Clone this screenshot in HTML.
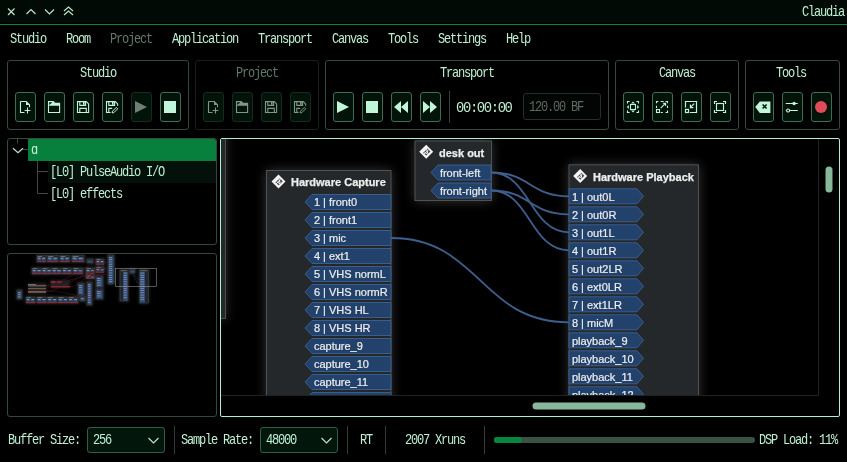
<!DOCTYPE html>
<html><head><meta charset="utf-8">
<style>
html,body{margin:0;padding:0;background:#000;width:847px;height:462px;overflow:hidden;position:relative}
div,span,svg{box-sizing:border-box}
.a{position:absolute}
.m{position:absolute;font-family:"Liberation Mono",monospace;font-size:15px;line-height:15px;letter-spacing:-1.5px;margin-left:-1px;white-space:pre;color:#bdf0d2;transform:scaleX(.8);transform-origin:0 0}
.dim{color:#5e7a6a}
.grp{position:absolute;border:1px solid #34483e;border-radius:3px;top:60px;height:70px}
.grp.dis{border-color:#161f1a}
.btn{position:absolute;top:92px;width:21px;height:30px;border:1px solid #3f6c52;border-radius:3px;background:#021409}
.btn.dis{border-color:#162b1e;background:#021409}
.btn svg{position:absolute;left:0;top:0}
.sep{position:absolute;width:1px;background:#2e3c35}
.node{position:absolute;background:#25282a;border:1px solid #47494b;box-shadow:0 0 10px 3px rgba(40,40,40,.55)}
.nt{position:absolute;font-family:"Liberation Sans",sans-serif;font-weight:bold;font-size:11px;line-height:11px;color:#eeeeee;white-space:pre}
.pt{position:absolute;font-family:"Liberation Sans",sans-serif;font-size:11px;line-height:11px;color:#eef0f2;white-space:pre}
</style></head>
<body>
<!-- title bar -->
<div class="a" style="left:0;top:0;width:847px;height:23px;background:#020a05"></div>
<div class="a" style="left:0;top:24px;width:847px;height:1px;background:#08843f"></div>
<svg class="a" style="left:0;top:0" width="90" height="24">
 <g stroke="#b8e8cc" stroke-width="1.2" fill="none">
  <path d="M8 8.5 L14.5 15 M14.5 8.5 L8 15"/>
  <path d="M26.5 14 L31 9.5 L35.5 14"/>
  <path d="M45 9.5 L49.5 14 L54 9.5"/>
  <path d="M64 11 L68.5 7 L73 11 M64 15 L68.5 11 L73 15"/>
 </g>
</svg>
<div class="m" style="left:802.5px;top:5px">Claudia</div>

<!-- menu -->
<div class="m" style="left:10.5px;top:32px">Studio</div>
<div class="m" style="left:66.5px;top:32px">Room</div>
<div class="m dim" style="left:110.5px;top:32px">Project</div>
<div class="m" style="left:172.5px;top:32px">Application</div>
<div class="m" style="left:258.5px;top:32px">Transport</div>
<div class="m" style="left:332.5px;top:32px">Canvas</div>
<div class="m" style="left:388.5px;top:32px">Tools</div>
<div class="m" style="left:439px;top:32px">Settings</div>
<div class="m" style="left:507px;top:32px">Help</div>

<!-- TOOLBAR -->
<div class="grp" style="left:7px;width:182px"></div>
<div class="m" style="left:80.5px;top:66px">Studio</div>
<div class="grp dis" style="left:195px;width:124px"></div>
<div class="m dim" style="left:236.5px;top:66px">Project</div>
<div class="grp" style="left:325px;width:284px"></div>
<div class="m" style="left:441px;top:66px">Transport</div>
<div class="grp" style="left:615px;width:124px"></div>
<div class="m" style="left:659.5px;top:66px">Canvas</div>
<div class="grp" style="left:745px;width:95px"></div>
<div class="m" style="left:776.5px;top:66px">Tools</div>

<!-- TOOLBUTTONS -->
<div class="btn" style="left:15px"><svg width="21" height="30" viewBox="1 1 21 30"><g fill="none" stroke="#c0f6da" stroke-width="1.1"><path d="M5.5 9.5 H11.2 L14.5 12.8 V15.3 M5.5 9.5 V20.5 H9.5"/><path d="M12.5 15.6 V21.4 M9.6 18.5 H15.4"/></g><path d="M11 9.5 L14.5 13 H11 Z" fill="#c0f6da"/></svg></div>
<div class="btn" style="left:44px"><svg width="21" height="30" viewBox="1 1 21 30"><path d="M4.5 20.5 V9.6 H9.2 L11 11.4 H15.6 V20.5 Z" fill="none" stroke="#c0f6da" stroke-width="1.1"/><path d="M4.5 9.6 H9.2 L11 11.4 H15.6 V13.7 H4.5 Z" fill="#c0f6da"/><path d="M5.1 10.2 H8.5 L5.1 13.1 Z" fill="#021409"/></svg></div>
<div class="btn" style="left:73px"><svg width="21" height="30" viewBox="1 1 21 30"><path d="M4.5 9.6 H13.3 L15.6 11.9 V20.5 H4.5 Z" fill="none" stroke="#c0f6da" stroke-width="1.1"/><path d="M6.8 9.6 V13.4 H12.6 V9.6" fill="none" stroke="#c0f6da" stroke-width="1.1"/><rect x="10" y="10" width="1.6" height="2.8" fill="#c0f6da"/><path d="M6.8 20.5 V16.4 H13.3 V20.5" fill="none" stroke="#c0f6da" stroke-width="1.1"/></svg></div>
<div class="btn" style="left:102px"><svg width="21" height="30" viewBox="1 1 21 30"><path d="M8.6 20.5 H4.5 V9.6 H13.3 L15.6 11.9 V13.8" fill="none" stroke="#c0f6da" stroke-width="1.1"/><path d="M6.8 9.6 V13.4 H12.6 V9.6" fill="none" stroke="#c0f6da" stroke-width="1.1"/><rect x="10" y="10" width="1.6" height="2.8" fill="#c0f6da"/><path d="M6.8 20.5 V16.4 H10.2" fill="none" stroke="#c0f6da" stroke-width="1.1"/><path d="M10.1 20.9 L10.5 19.2 L14.3 15.4 L15.7 16.8 L11.9 20.6 Z" fill="none" stroke="#c0f6da" stroke-width="1"/></svg></div>
<div class="btn dis" style="left:131px"><svg width="21" height="30" viewBox="1 1 21 30"><path d="M4 9 L16 15 L4 21 Z" fill="#6e8074"/></svg></div>
<div class="btn" style="left:160px"><svg width="21" height="30" viewBox="1 1 21 30"><rect x="4" y="9" width="12" height="12" fill="#c0f6da"/></svg></div>
<div class="btn dis" style="left:203px"><svg width="21" height="30" viewBox="1 1 21 30"><g fill="none" stroke="#84968a" stroke-width="1.1"><path d="M5.5 9.5 H11.2 L14.5 12.8 V15.3 M5.5 9.5 V20.5 H9.5"/><path d="M12.5 15.6 V21.4 M9.6 18.5 H15.4"/></g><path d="M11 9.5 L14.5 13 H11 Z" fill="#84968a"/></svg></div>
<div class="btn dis" style="left:232px"><svg width="21" height="30" viewBox="1 1 21 30"><path d="M4.5 20.5 V9.6 H9.2 L11 11.4 H15.6 V20.5 Z" fill="none" stroke="#84968a" stroke-width="1.1"/><path d="M4.5 9.6 H9.2 L11 11.4 H15.6 V13.7 H4.5 Z" fill="#84968a"/><path d="M5.1 10.2 H8.5 L5.1 13.1 Z" fill="#021409"/></svg></div>
<div class="btn dis" style="left:261px"><svg width="21" height="30" viewBox="1 1 21 30"><path d="M4.5 9.6 H13.3 L15.6 11.9 V20.5 H4.5 Z" fill="none" stroke="#84968a" stroke-width="1.1"/><path d="M6.8 9.6 V13.4 H12.6 V9.6" fill="none" stroke="#84968a" stroke-width="1.1"/><rect x="10" y="10" width="1.6" height="2.8" fill="#84968a"/><path d="M6.8 20.5 V16.4 H13.3 V20.5" fill="none" stroke="#84968a" stroke-width="1.1"/></svg></div>
<div class="btn dis" style="left:290px"><svg width="21" height="30" viewBox="1 1 21 30"><path d="M8.6 20.5 H4.5 V9.6 H13.3 L15.6 11.9 V13.8" fill="none" stroke="#84968a" stroke-width="1.1"/><path d="M6.8 9.6 V13.4 H12.6 V9.6" fill="none" stroke="#84968a" stroke-width="1.1"/><rect x="10" y="10" width="1.6" height="2.8" fill="#84968a"/><path d="M6.8 20.5 V16.4 H10.2" fill="none" stroke="#84968a" stroke-width="1.1"/><path d="M10.1 20.9 L10.5 19.2 L14.3 15.4 L15.7 16.8 L11.9 20.6 Z" fill="none" stroke="#84968a" stroke-width="1"/></svg></div>
<div class="btn" style="left:333px"><svg width="21" height="30" viewBox="1 1 21 30"><path d="M4 9 L16 15 L4 21 Z" fill="#c0f6da"/></svg></div>
<div class="btn" style="left:362px"><svg width="21" height="30" viewBox="1 1 21 30"><rect x="4" y="9" width="12" height="12" fill="#c0f6da"/></svg></div>
<div class="btn" style="left:391px"><svg width="21" height="30" viewBox="1 1 21 30"><path d="M3 15 L10 9 V21 Z M10 15 L17 9 V21 Z" fill="#c0f6da"/></svg></div>
<div class="btn" style="left:420px"><svg width="21" height="30" viewBox="1 1 21 30"><path d="M17 15 L10 9 V21 Z M10 15 L3 9 V21 Z" fill="#c0f6da"/></svg></div>
<div class="btn" style="left:623px"><svg width="21" height="30" viewBox="1 1 21 30"><g fill="none" stroke="#c0f6da" stroke-width="1.1"><path d="M4.5 11.6 V9.5 H6.6 M13.4 9.5 H15.5 V11.6 M15.5 18.4 V20.5 H13.4 M6.6 20.5 H4.5 V18.4"/><rect x="7.5" y="12.5" width="5" height="5"/></g><path d="M8 11.4 L10 9.4 L12 11.4 Z M8 18.6 L10 20.6 L12 18.6 Z M5.8 13 L3.8 15 L5.8 17 Z M14.2 13 L16.2 15 L14.2 17 Z" fill="#c0f6da"/></svg></div>
<div class="btn" style="left:652px"><svg width="21" height="30" viewBox="1 1 21 30"><g fill="none" stroke="#c0f6da" stroke-width="1.1"><path d="M4.5 11.2 V9.5 H6.3 M8.7 9.5 H11.6 M13.6 9.5 H15.5 V11.2 M15.5 13.7 V16.1 M15.5 18.6 V20.5 H13.6 M8.7 20.5 H10.8 M4.5 13.7 V16.1"/><rect x="4.5" y="17.5" width="3" height="3"/><path d="M8.7 16.1 L13.4 11.4 M10.8 11.2 H13.6 V14"/></g></svg></div>
<div class="btn" style="left:681px"><svg width="21" height="30" viewBox="1 1 21 30"><g fill="none" stroke="#c0f6da" stroke-width="1.2"><path d="M4.5 15.4 V9.5 H15.5 V20.5 H8.8"/><rect x="4.5" y="17.4" width="3" height="3.1"/><path d="M13.2 11.6 L9.4 15.4 M9.4 12.6 V15.6 H12.4"/></g></svg></div>
<div class="btn" style="left:710px"><svg width="21" height="30" viewBox="1 1 21 30"><g fill="none" stroke="#c0f6da" stroke-width="1.2"><path d="M4.5 12 V9.5 H7 M13 9.5 H15.5 V12 M15.5 18 V20.5 H13 M7 20.5 H4.5 V18"/><rect x="6.5" y="11.5" width="7" height="7" stroke-width="1.15"/></g></svg></div>
<div class="btn" style="left:753px"><svg width="21" height="30" viewBox="1 1 21 30"><path d="M2.2 15 L6.8 9.4 H17.4 V21 H6.8 Z" fill="#c0f6da"/><path d="M9.6 12.4 L13.6 16.6 M13.6 12.4 L9.6 16.6" stroke="#04120a" stroke-width="1.5"/></svg></div>
<div class="btn" style="left:782px"><svg width="21" height="30" viewBox="1 1 21 30"><g stroke="#c0f6da" stroke-width="1.1" fill="none"><path d="M3.8 11.5 H15.8 M7.6 18.5 H15.8 M3.8 18.5 H4.5"/><circle cx="6.1" cy="18.5" r="1.5"/></g><circle cx="12.1" cy="11.5" r="1.7" fill="#c0f6da"/></svg></div>
<div class="btn" style="left:811px"><svg width="21" height="30" viewBox="1 1 21 30"><circle cx="10" cy="15" r="6" fill="#e04a5a"/></svg></div>
<div class="sep" style="left:449px;top:91px;height:32px;background:#33433b"></div>
<div class="m" style="left:457px;top:100.5px;transform:scaleX(.925)">00:00:00</div>
<div class="a" style="left:523px;top:93px;width:78px;height:27px;border:1px solid #22302a;border-radius:3px;background:#020503"></div>
<div class="m" style="left:530px;top:100px;color:#5c6a62">120.00 BF</div>
<!-- LEFT PANELS -->
<div class="a" style="left:7px;top:138px;width:210px;height:107px;border:1px solid #34483e;border-radius:3px"></div>
<div class="a" style="left:28px;top:139px;width:188px;height:22px;background:#07803e;border-top-right-radius:2px"></div>
<div class="a" style="left:48px;top:161px;width:168px;height:22px;background:#03110a"></div>
<svg class="a" style="left:0;top:130px" width="60" height="80">
 <g stroke="#3c4c44" stroke-width="1" fill="none">
  <path d="M17.5 9 V13.5"/>
  <path d="M23 19.5 H28"/>
  <path d="M37.5 31 V63.5 H48 M37.5 41.5 H48"/>
 </g>
 <path d="M13 18.3 L18 22.8 L23 18.3" stroke="#b8e8cc" stroke-width="1.2" fill="none"/>
</svg>
<div class="m" style="left:32px;top:143px;color:#c8f0d8">ɑ</div>
<div class="m" style="left:50.5px;top:165px">[L0] PulseAudio I/O</div>
<div class="m" style="left:50.5px;top:187px">[L0] effects</div>
<div class="a" style="left:7px;top:253px;width:210px;height:164px;border:1px solid #34483e;border-radius:3px"></div>
<svg class="a" style="left:8px;top:254px" width="208" height="60" viewBox="8 254 208 60">
<defs><filter id="bl" x="-20%" y="-20%" width="140%" height="140%"><feGaussianBlur stdDeviation="0.5"/></filter><filter id="gl" x="-50%" y="-50%" width="200%" height="200%"><feGaussianBlur stdDeviation="1.6"/></filter></defs>
<g filter="url(#gl)" fill="#3a3c40" opacity=".55">
<rect x="36" y="254.5" width="11" height="8.5"/>
<rect x="46.5" y="254.5" width="12.5" height="8.5"/>
<rect x="59" y="254.5" width="11.5" height="8.5"/>
<rect x="71" y="254.5" width="14" height="8.5"/>
<rect x="31" y="267" width="11.5" height="8"/>
<rect x="41" y="267" width="11.5" height="8"/>
<rect x="51" y="267" width="11.5" height="8"/>
<rect x="61.5" y="267" width="11" height="8"/>
<rect x="72" y="267" width="12" height="8"/>
<rect x="25" y="296" width="11" height="8"/>
<rect x="36" y="296" width="11.5" height="8"/>
<rect x="46.5" y="296" width="11.5" height="8"/>
<rect x="57" y="296" width="12" height="8"/>
<rect x="67.5" y="296" width="11.5" height="8"/>
<rect x="86" y="258" width="8" height="6"/>
<rect x="95" y="258" width="10" height="7.5"/>
<rect x="85" y="267" width="10.5" height="7.5"/>
<rect x="95" y="266" width="10" height="7.5"/>
<rect x="85" y="273.5" width="10.5" height="6"/>
<rect x="107" y="254" width="8" height="31"/>
<rect x="16" y="289" width="7" height="11"/>
<rect x="77" y="282" width="8" height="14"/>
<rect x="86" y="281" width="7" height="25"/>
<rect x="95" y="275" width="9" height="13"/>
<rect x="95" y="288" width="9" height="12"/>
<rect x="79" y="295" width="7" height="7"/>
<rect x="119" y="269" width="10" height="33"/>
<rect x="129" y="268" width="7" height="6"/>
<rect x="138.5" y="269" width="11" height="35"/>
<rect x="28" y="283" width="19" height="11"/><rect x="50" y="280" width="20" height="8"/>
</g>
<g filter="url(#bl)">
<rect x="37" y="255.5" width="9" height="6.5" fill="#24272b" stroke="#4a4c50" stroke-width=".4"/>
<rect x="37.6" y="257.3" width="3.6" height="3.3" fill="#34507a"/>
<rect x="41.8" y="257.3" width="3.6" height="3.3" fill="#34507a"/>
<rect x="37.6" y="256.0" width="4.5" height=".6" fill="#9a9ca0"/>
<rect x="37.6" y="257.9" width="2.6999999999999997" height=".5" fill="#c8d0dc"/><rect x="42.4" y="257.9" width="2.6999999999999997" height=".5" fill="#c8d0dc"/>
<rect x="37" y="261.0" width="9" height="1.1" fill="#8e2636"/>
<rect x="47.5" y="255.5" width="10.5" height="6.5" fill="#24272b" stroke="#4a4c50" stroke-width=".4"/>
<rect x="48.1" y="257.3" width="4.35" height="3.3" fill="#34507a"/>
<rect x="53.05" y="257.3" width="4.35" height="3.3" fill="#34507a"/>
<rect x="48.1" y="256.0" width="5.25" height=".6" fill="#9a9ca0"/>
<rect x="48.1" y="257.9" width="3.15" height=".5" fill="#c8d0dc"/><rect x="53.65" y="257.9" width="3.15" height=".5" fill="#c8d0dc"/>
<rect x="47.5" y="261.0" width="10.5" height="1.1" fill="#8e2636"/>
<rect x="60" y="255.5" width="9.5" height="6.5" fill="#24272b" stroke="#4a4c50" stroke-width=".4"/>
<rect x="60.6" y="257.3" width="3.85" height="3.3" fill="#34507a"/>
<rect x="65.05" y="257.3" width="3.85" height="3.3" fill="#34507a"/>
<rect x="60.6" y="256.0" width="4.75" height=".6" fill="#9a9ca0"/>
<rect x="60.6" y="257.9" width="2.85" height=".5" fill="#c8d0dc"/><rect x="65.65" y="257.9" width="2.85" height=".5" fill="#c8d0dc"/>
<rect x="60" y="261.0" width="9.5" height="1.1" fill="#8e2636"/>
<rect x="72" y="255.5" width="12" height="6.5" fill="#24272b" stroke="#4a4c50" stroke-width=".4"/>
<rect x="72.6" y="257.3" width="5.1" height="3.3" fill="#34507a"/>
<rect x="78.3" y="257.3" width="5.1" height="3.3" fill="#34507a"/>
<rect x="72.6" y="256.0" width="6.0" height=".6" fill="#9a9ca0"/>
<rect x="72.6" y="257.9" width="3.5999999999999996" height=".5" fill="#c8d0dc"/><rect x="78.9" y="257.9" width="3.5999999999999996" height=".5" fill="#c8d0dc"/>
<rect x="72" y="261.0" width="12" height="1.1" fill="#8e2636"/>
<rect x="32" y="268" width="9.5" height="6" fill="#24272b" stroke="#4a4c50" stroke-width=".4"/>
<rect x="32.6" y="269.8" width="3.85" height="2.8" fill="#34507a"/>
<rect x="37.05" y="269.8" width="3.85" height="2.8" fill="#34507a"/>
<rect x="32.6" y="268.5" width="4.75" height=".6" fill="#9a9ca0"/>
<rect x="32.6" y="270.4" width="2.85" height=".5" fill="#c8d0dc"/><rect x="37.65" y="270.4" width="2.85" height=".5" fill="#c8d0dc"/>
<rect x="32" y="273" width="9.5" height="1.1" fill="#8e2636"/>
<rect x="42" y="268" width="9.5" height="6" fill="#24272b" stroke="#4a4c50" stroke-width=".4"/>
<rect x="42.6" y="269.8" width="3.85" height="2.8" fill="#34507a"/>
<rect x="47.05" y="269.8" width="3.85" height="2.8" fill="#34507a"/>
<rect x="42.6" y="268.5" width="4.75" height=".6" fill="#9a9ca0"/>
<rect x="42.6" y="270.4" width="2.85" height=".5" fill="#c8d0dc"/><rect x="47.65" y="270.4" width="2.85" height=".5" fill="#c8d0dc"/>
<rect x="42" y="273" width="9.5" height="1.1" fill="#8e2636"/>
<rect x="52" y="268" width="9.5" height="6" fill="#24272b" stroke="#4a4c50" stroke-width=".4"/>
<rect x="52.6" y="269.8" width="3.85" height="2.8" fill="#34507a"/>
<rect x="57.05" y="269.8" width="3.85" height="2.8" fill="#34507a"/>
<rect x="52.6" y="268.5" width="4.75" height=".6" fill="#9a9ca0"/>
<rect x="52.6" y="270.4" width="2.85" height=".5" fill="#c8d0dc"/><rect x="57.65" y="270.4" width="2.85" height=".5" fill="#c8d0dc"/>
<rect x="52" y="273" width="9.5" height="1.1" fill="#8e2636"/>
<rect x="62.5" y="268" width="9" height="6" fill="#24272b" stroke="#4a4c50" stroke-width=".4"/>
<rect x="63.1" y="269.8" width="3.6" height="2.8" fill="#34507a"/>
<rect x="67.3" y="269.8" width="3.6" height="2.8" fill="#34507a"/>
<rect x="63.1" y="268.5" width="4.5" height=".6" fill="#9a9ca0"/>
<rect x="63.1" y="270.4" width="2.6999999999999997" height=".5" fill="#c8d0dc"/><rect x="67.9" y="270.4" width="2.6999999999999997" height=".5" fill="#c8d0dc"/>
<rect x="62.5" y="273" width="9" height="1.1" fill="#8e2636"/>
<rect x="73" y="268" width="10" height="6" fill="#24272b" stroke="#4a4c50" stroke-width=".4"/>
<rect x="73.6" y="269.8" width="4.1" height="2.8" fill="#34507a"/>
<rect x="78.3" y="269.8" width="4.1" height="2.8" fill="#34507a"/>
<rect x="73.6" y="268.5" width="5.0" height=".6" fill="#9a9ca0"/>
<rect x="73.6" y="270.4" width="3.0" height=".5" fill="#c8d0dc"/><rect x="78.9" y="270.4" width="3.0" height=".5" fill="#c8d0dc"/>
<rect x="73" y="273" width="10" height="1.1" fill="#8e2636"/>
<rect x="26" y="297" width="9" height="6" fill="#24272b" stroke="#4a4c50" stroke-width=".4"/>
<rect x="26.6" y="298.8" width="3.6" height="2.8" fill="#34507a"/>
<rect x="30.8" y="298.8" width="3.6" height="2.8" fill="#34507a"/>
<rect x="26.6" y="297.5" width="4.5" height=".6" fill="#9a9ca0"/>
<rect x="26.6" y="299.4" width="2.6999999999999997" height=".5" fill="#c8d0dc"/><rect x="31.4" y="299.4" width="2.6999999999999997" height=".5" fill="#c8d0dc"/>
<rect x="26" y="302" width="9" height="1.1" fill="#8e2636"/>
<rect x="37" y="297" width="9.5" height="6" fill="#24272b" stroke="#4a4c50" stroke-width=".4"/>
<rect x="37.6" y="298.8" width="3.85" height="2.8" fill="#34507a"/>
<rect x="42.05" y="298.8" width="3.85" height="2.8" fill="#34507a"/>
<rect x="37.6" y="297.5" width="4.75" height=".6" fill="#9a9ca0"/>
<rect x="37.6" y="299.4" width="2.85" height=".5" fill="#c8d0dc"/><rect x="42.65" y="299.4" width="2.85" height=".5" fill="#c8d0dc"/>
<rect x="37" y="302" width="9.5" height="1.1" fill="#8e2636"/>
<rect x="47.5" y="297" width="9.5" height="6" fill="#24272b" stroke="#4a4c50" stroke-width=".4"/>
<rect x="48.1" y="298.8" width="3.85" height="2.8" fill="#34507a"/>
<rect x="52.55" y="298.8" width="3.85" height="2.8" fill="#34507a"/>
<rect x="48.1" y="297.5" width="4.75" height=".6" fill="#9a9ca0"/>
<rect x="48.1" y="299.4" width="2.85" height=".5" fill="#c8d0dc"/><rect x="53.15" y="299.4" width="2.85" height=".5" fill="#c8d0dc"/>
<rect x="47.5" y="302" width="9.5" height="1.1" fill="#8e2636"/>
<rect x="58" y="297" width="10" height="6" fill="#24272b" stroke="#4a4c50" stroke-width=".4"/>
<rect x="58.6" y="298.8" width="4.1" height="2.8" fill="#34507a"/>
<rect x="63.3" y="298.8" width="4.1" height="2.8" fill="#34507a"/>
<rect x="58.6" y="297.5" width="5.0" height=".6" fill="#9a9ca0"/>
<rect x="58.6" y="299.4" width="3.0" height=".5" fill="#c8d0dc"/><rect x="63.9" y="299.4" width="3.0" height=".5" fill="#c8d0dc"/>
<rect x="58" y="302" width="10" height="1.1" fill="#8e2636"/>
<rect x="68.5" y="297" width="9.5" height="6" fill="#24272b" stroke="#4a4c50" stroke-width=".4"/>
<rect x="69.1" y="298.8" width="3.85" height="2.8" fill="#34507a"/>
<rect x="73.55" y="298.8" width="3.85" height="2.8" fill="#34507a"/>
<rect x="69.1" y="297.5" width="4.75" height=".6" fill="#9a9ca0"/>
<rect x="69.1" y="299.4" width="2.85" height=".5" fill="#c8d0dc"/><rect x="74.15" y="299.4" width="2.85" height=".5" fill="#c8d0dc"/>
<rect x="68.5" y="302" width="9.5" height="1.1" fill="#8e2636"/>
<rect x="87" y="259" width="6" height="4" fill="#24272b" stroke="#4a4c50" stroke-width=".4"/>
<rect x="87.6" y="260.5" width="4.8" height="2" fill="#34507c"/>
<rect x="96" y="259" width="8" height="5.5" fill="#24272b" stroke="#4a4c50" stroke-width=".4"/>
<rect x="96.6" y="260.8" width="3.1" height="2.3" fill="#34507a"/>
<rect x="100.3" y="260.8" width="3.1" height="2.3" fill="#34507a"/>
<rect x="96.6" y="259.5" width="4.0" height=".6" fill="#9a9ca0"/>
<rect x="96.6" y="261.4" width="2.4" height=".5" fill="#c8d0dc"/><rect x="100.9" y="261.4" width="2.4" height=".5" fill="#c8d0dc"/>
<rect x="96" y="263.5" width="8" height="1.1" fill="#8e2636"/>
<rect x="86" y="268" width="8.5" height="5.5" fill="#24272b" stroke="#4a4c50" stroke-width=".4"/>
<rect x="86.6" y="269.8" width="3.35" height="2.3" fill="#34507a"/>
<rect x="90.55" y="269.8" width="3.35" height="2.3" fill="#34507a"/>
<rect x="86.6" y="268.5" width="4.25" height=".6" fill="#9a9ca0"/>
<rect x="86.6" y="270.4" width="2.55" height=".5" fill="#c8d0dc"/><rect x="91.15" y="270.4" width="2.55" height=".5" fill="#c8d0dc"/>
<rect x="86" y="272.5" width="8.5" height="1.1" fill="#8e2636"/>
<rect x="96" y="267" width="8" height="5.5" fill="#24272b" stroke="#4a4c50" stroke-width=".4"/>
<rect x="96.6" y="268.8" width="3.1" height="2.3" fill="#34507a"/>
<rect x="100.3" y="268.8" width="3.1" height="2.3" fill="#34507a"/>
<rect x="96.6" y="267.5" width="4.0" height=".6" fill="#9a9ca0"/>
<rect x="96.6" y="269.4" width="2.4" height=".5" fill="#c8d0dc"/><rect x="100.9" y="269.4" width="2.4" height=".5" fill="#c8d0dc"/>
<rect x="96" y="271.5" width="8" height="1.1" fill="#8e2636"/>
<rect x="86" y="274.5" width="8.5" height="4" fill="#24272b" stroke="#4a4c50" stroke-width=".4"/>
<rect x="86.6" y="276.3" width="3.35" height="0.7999999999999998" fill="#34507a"/>
<rect x="90.55" y="276.3" width="3.35" height="0.7999999999999998" fill="#34507a"/>
<rect x="86.6" y="275.0" width="4.25" height=".6" fill="#9a9ca0"/>
<rect x="86.6" y="276.9" width="2.55" height=".5" fill="#c8d0dc"/><rect x="91.15" y="276.9" width="2.55" height=".5" fill="#c8d0dc"/>
<rect x="86" y="277.5" width="8.5" height="1.1" fill="#8e2636"/>
<rect x="108" y="255" width="6" height="29" fill="#24272b" stroke="#4a4c50" stroke-width=".4"/>
<rect x="108.6" y="256.5" width="4.8" height="27" fill="#34507c"/>
<rect x="109" y="257.3" width="3.0" height=".5" fill="#aab6c8"/>
<rect x="109" y="259.5" width="3.0" height=".5" fill="#aab6c8"/>
<rect x="109" y="261.7" width="3.0" height=".5" fill="#aab6c8"/>
<rect x="109" y="263.90000000000003" width="3.0" height=".5" fill="#aab6c8"/>
<rect x="109" y="266.1" width="3.0" height=".5" fill="#aab6c8"/>
<rect x="109" y="268.3" width="3.0" height=".5" fill="#aab6c8"/>
<rect x="109" y="270.5" width="3.0" height=".5" fill="#aab6c8"/>
<rect x="109" y="272.7" width="3.0" height=".5" fill="#aab6c8"/>
<rect x="109" y="274.90000000000003" width="3.0" height=".5" fill="#aab6c8"/>
<rect x="109" y="277.1" width="3.0" height=".5" fill="#aab6c8"/>
<rect x="109" y="279.3" width="3.0" height=".5" fill="#aab6c8"/>
<rect x="109" y="281.5" width="3.0" height=".5" fill="#aab6c8"/>
<rect x="17" y="290" width="5" height="9" fill="#24272b" stroke="#4a4c50" stroke-width=".4"/>
<rect x="17.6" y="291.5" width="3.8" height="7" fill="#34507c"/>
<rect x="18" y="292.3" width="2.5" height=".5" fill="#aab6c8"/>
<rect x="18" y="294.5" width="2.5" height=".5" fill="#aab6c8"/>
<rect x="18" y="296.7" width="2.5" height=".5" fill="#aab6c8"/>
<rect x="78" y="283" width="6" height="12" fill="#24272b" stroke="#4a4c50" stroke-width=".4"/>
<rect x="78.6" y="284.5" width="4.8" height="10" fill="#34507c"/>
<rect x="79" y="285.3" width="3.0" height=".5" fill="#aab6c8"/>
<rect x="79" y="287.5" width="3.0" height=".5" fill="#aab6c8"/>
<rect x="79" y="289.7" width="3.0" height=".5" fill="#aab6c8"/>
<rect x="79" y="291.90000000000003" width="3.0" height=".5" fill="#aab6c8"/>
<rect x="87" y="282" width="5" height="23" fill="#24272b" stroke="#4a4c50" stroke-width=".4"/>
<rect x="87.6" y="283.5" width="3.8" height="21" fill="#34507c"/>
<rect x="88" y="284.3" width="2.5" height=".5" fill="#aab6c8"/>
<rect x="88" y="286.5" width="2.5" height=".5" fill="#aab6c8"/>
<rect x="88" y="288.7" width="2.5" height=".5" fill="#aab6c8"/>
<rect x="88" y="290.90000000000003" width="2.5" height=".5" fill="#aab6c8"/>
<rect x="88" y="293.1" width="2.5" height=".5" fill="#aab6c8"/>
<rect x="88" y="295.3" width="2.5" height=".5" fill="#aab6c8"/>
<rect x="88" y="297.5" width="2.5" height=".5" fill="#aab6c8"/>
<rect x="88" y="299.7" width="2.5" height=".5" fill="#aab6c8"/>
<rect x="88" y="301.90000000000003" width="2.5" height=".5" fill="#aab6c8"/>
<rect x="96" y="276" width="7" height="11" fill="#24272b" stroke="#4a4c50" stroke-width=".4"/>
<rect x="96.6" y="277.5" width="5.8" height="9" fill="#34507c"/>
<rect x="97" y="278.3" width="3.5" height=".5" fill="#aab6c8"/>
<rect x="97" y="280.5" width="3.5" height=".5" fill="#aab6c8"/>
<rect x="97" y="282.7" width="3.5" height=".5" fill="#aab6c8"/>
<rect x="97" y="284.90000000000003" width="3.5" height=".5" fill="#aab6c8"/>
<rect x="96" y="289" width="7" height="10" fill="#24272b" stroke="#4a4c50" stroke-width=".4"/>
<rect x="96.6" y="290.5" width="5.8" height="8" fill="#34507c"/>
<rect x="97" y="291.3" width="3.5" height=".5" fill="#aab6c8"/>
<rect x="97" y="293.5" width="3.5" height=".5" fill="#aab6c8"/>
<rect x="97" y="295.7" width="3.5" height=".5" fill="#aab6c8"/>
<rect x="80" y="296" width="5" height="5" fill="#24272b" stroke="#4a4c50" stroke-width=".4"/>
<rect x="80.6" y="297.5" width="3.8" height="3" fill="#34507c"/>
<rect x="81" y="298.3" width="2.5" height=".5" fill="#aab6c8"/>
<rect x="120" y="270" width="8" height="31" fill="#24272b" stroke="#4a4c50" stroke-width=".4"/>
<rect x="123.2" y="272" width="4.4" height="28.5" fill="#34507c"/>
<rect x="121" y="270.6" width="5.6" height=".5" fill="#9aa0a8"/>
<rect x="123.60000000000001" y="272.8" width="3.2" height=".5" fill="#aab6c8"/>
<rect x="123.60000000000001" y="275.0" width="3.2" height=".5" fill="#aab6c8"/>
<rect x="123.60000000000001" y="277.2" width="3.2" height=".5" fill="#aab6c8"/>
<rect x="123.60000000000001" y="279.40000000000003" width="3.2" height=".5" fill="#aab6c8"/>
<rect x="123.60000000000001" y="281.6" width="3.2" height=".5" fill="#aab6c8"/>
<rect x="123.60000000000001" y="283.8" width="3.2" height=".5" fill="#aab6c8"/>
<rect x="123.60000000000001" y="286.0" width="3.2" height=".5" fill="#aab6c8"/>
<rect x="123.60000000000001" y="288.2" width="3.2" height=".5" fill="#aab6c8"/>
<rect x="123.60000000000001" y="290.40000000000003" width="3.2" height=".5" fill="#aab6c8"/>
<rect x="123.60000000000001" y="292.6" width="3.2" height=".5" fill="#aab6c8"/>
<rect x="123.60000000000001" y="294.8" width="3.2" height=".5" fill="#aab6c8"/>
<rect x="123.60000000000001" y="297.0" width="3.2" height=".5" fill="#aab6c8"/>
<rect x="130" y="269" width="5" height="4" fill="#24272b" stroke="#4a4c50" stroke-width=".4"/>
<rect x="130.6" y="270.5" width="3.8" height="2" fill="#34507c"/>
<rect x="139.5" y="270" width="9" height="33" fill="#24272b" stroke="#4a4c50" stroke-width=".4"/>
<rect x="140.0" y="272" width="4.95" height="30.5" fill="#34507c"/>
<rect x="140.5" y="270.6" width="6.3" height=".5" fill="#9aa0a8"/>
<rect x="140.4" y="272.8" width="3.6" height=".5" fill="#aab6c8"/>
<rect x="140.4" y="275.0" width="3.6" height=".5" fill="#aab6c8"/>
<rect x="140.4" y="277.2" width="3.6" height=".5" fill="#aab6c8"/>
<rect x="140.4" y="279.40000000000003" width="3.6" height=".5" fill="#aab6c8"/>
<rect x="140.4" y="281.6" width="3.6" height=".5" fill="#aab6c8"/>
<rect x="140.4" y="283.8" width="3.6" height=".5" fill="#aab6c8"/>
<rect x="140.4" y="286.0" width="3.6" height=".5" fill="#aab6c8"/>
<rect x="140.4" y="288.2" width="3.6" height=".5" fill="#aab6c8"/>
<rect x="140.4" y="290.40000000000003" width="3.6" height=".5" fill="#aab6c8"/>
<rect x="140.4" y="292.6" width="3.6" height=".5" fill="#aab6c8"/>
<rect x="140.4" y="294.8" width="3.6" height=".5" fill="#aab6c8"/>
<rect x="140.4" y="297.0" width="3.6" height=".5" fill="#aab6c8"/>
<rect x="140.4" y="299.2" width="3.6" height=".5" fill="#aab6c8"/>
<g fill="#6e5444"><rect x="28" y="285" width="18" height="1.4"/><rect x="28" y="288" width="18" height="1.2"/></g>
<rect x="28" y="291" width="18" height="1.8" fill="#7e5a48"/>
<rect x="28" y="284" width="8" height=".5" fill="#c0c0c0"/>
<g fill="#8a2434"><rect x="51" y="281" width="4.5" height="2"/><rect x="57" y="281" width="4.5" height="2"/><rect x="51" y="286" width="19" height="1.5"/></g>
<g stroke="#5e1c28" stroke-width=".5" fill="none" opacity=".9"><path d="M46 292 C62 290 80 272 108 268 M46 291 C70 291 85 300 96 299 M61 282 C75 280 90 272 108 275 M70 287 C85 285 95 262 108 262 M46 286 C60 284 80 270 96 262"/></g>
</g>
<path d="M130 271 C134 271 136 280 139.5 280 M130 273 C134 273 136 284 139.5 284" stroke="#3a5080" stroke-width=".4" fill="none"/><rect x="115.5" y="268.5" width="41" height="18" fill="none" stroke="#a0a0a0" stroke-width=".7" opacity=".75"/>
</svg>
<!-- CANVAS -->
<div class="a" style="left:220px;top:138px;width:620px;height:279px;border:1px solid #b0f0d0;border-radius:2px;background:#000"></div>
<svg class="a" style="left:221px;top:139px;will-change:transform" width="618" height="277" viewBox="221 139 618 277" font-family="'Liberation Sans', sans-serif">
<defs><filter id="glow" x="-50%" y="-50%" width="200%" height="200%"><feGaussianBlur stdDeviation="6"/></filter><clipPath id="scene"><rect x="221" y="139" width="597" height="256"/></clipPath></defs>
<g clip-path="url(#scene)">
<rect x="150" y="120" width="75.5" height="198.5" fill="#484848" filter="url(#glow)" opacity=".7"/>
<rect x="150" y="120" width="75.5" height="198.5" fill="#25282a" stroke="#4a4c4e" stroke-width="1"/>
<rect x="266" y="170" width="125.5" height="260" fill="#484848" filter="url(#glow)" opacity=".7"/>
<rect x="266.5" y="170.5" width="124.5" height="259" fill="#25282a" stroke="#505254" stroke-width="1"/>
<path d="M278.5 174.4 L285.5 181.4 L278.5 188.4 L271.5 181.4 Z" fill="#f4f4f4"/>
<path d="M279.7 178.20000000000002 L282.7 181.20000000000002 L278.7 185.20000000000002 L275.3 182.6 Z" fill="#4a4a4a"/>
<path d="M276.7 181.6 L281.1 184.6 M278.9 178.8 L280.1 183.0 M275.9 184.0 L280.7 179.6" stroke="#f4f4f4" stroke-width="1" fill="none"/>
<text x="291" y="185.5" font-size="11" font-weight="bold" fill="#eeeeee" stroke="#eeeeee" stroke-width=".25">Hardware Capture</text>
<path d="M305 202.0 L312 194.5 H391 V209.5 H312 Z" fill="#22416b" stroke="#3b5d8c" stroke-width="1"/>
<text x="313.9" y="205.9" font-size="11" fill="#eeeeee" stroke="#eeeeee" stroke-width=".2">1 | front0</text>
<path d="M305 220.0 L312 212.5 H391 V227.5 H312 Z" fill="#22416b" stroke="#3b5d8c" stroke-width="1"/>
<text x="313.9" y="223.9" font-size="11" fill="#eeeeee" stroke="#eeeeee" stroke-width=".2">2 | front1</text>
<path d="M305 238.0 L312 230.5 H391 V245.5 H312 Z" fill="#22416b" stroke="#3b5d8c" stroke-width="1"/>
<text x="313.9" y="241.9" font-size="11" fill="#eeeeee" stroke="#eeeeee" stroke-width=".2">3 | mic</text>
<path d="M305 256.0 L312 248.5 H391 V263.5 H312 Z" fill="#22416b" stroke="#3b5d8c" stroke-width="1"/>
<text x="313.9" y="259.9" font-size="11" fill="#eeeeee" stroke="#eeeeee" stroke-width=".2">4 | ext1</text>
<path d="M305 274.0 L312 266.5 H391 V281.5 H312 Z" fill="#22416b" stroke="#3b5d8c" stroke-width="1"/>
<text x="313.9" y="277.9" font-size="11" fill="#eeeeee" stroke="#eeeeee" stroke-width=".2">5 | VHS normL</text>
<path d="M305 292.0 L312 284.5 H391 V299.5 H312 Z" fill="#22416b" stroke="#3b5d8c" stroke-width="1"/>
<text x="313.9" y="295.9" font-size="11" fill="#eeeeee" stroke="#eeeeee" stroke-width=".2">6 | VHS normR</text>
<path d="M305 310.0 L312 302.5 H391 V317.5 H312 Z" fill="#22416b" stroke="#3b5d8c" stroke-width="1"/>
<text x="313.9" y="313.9" font-size="11" fill="#eeeeee" stroke="#eeeeee" stroke-width=".2">7 | VHS HL</text>
<path d="M305 328.0 L312 320.5 H391 V335.5 H312 Z" fill="#22416b" stroke="#3b5d8c" stroke-width="1"/>
<text x="313.9" y="331.9" font-size="11" fill="#eeeeee" stroke="#eeeeee" stroke-width=".2">8 | VHS HR</text>
<path d="M305 346.0 L312 338.5 H391 V353.5 H312 Z" fill="#22416b" stroke="#3b5d8c" stroke-width="1"/>
<text x="313.9" y="349.9" font-size="11" fill="#eeeeee" stroke="#eeeeee" stroke-width=".2">capture_9</text>
<path d="M305 364.0 L312 356.5 H391 V371.5 H312 Z" fill="#22416b" stroke="#3b5d8c" stroke-width="1"/>
<text x="313.9" y="367.9" font-size="11" fill="#eeeeee" stroke="#eeeeee" stroke-width=".2">capture_10</text>
<path d="M305 382.0 L312 374.5 H391 V389.5 H312 Z" fill="#22416b" stroke="#3b5d8c" stroke-width="1"/>
<text x="313.9" y="385.9" font-size="11" fill="#eeeeee" stroke="#eeeeee" stroke-width=".2">capture_11</text>
<path d="M305 400.0 L312 392.5 H391 V407.5 H312 Z" fill="#22416b" stroke="#3b5d8c" stroke-width="1"/>
<text x="313.9" y="403.9" font-size="11" fill="#eeeeee" stroke="#eeeeee" stroke-width=".2">capture_12</text>
<rect x="414.5" y="140.5" width="77.5" height="60.5" fill="#484848" filter="url(#glow)" opacity=".7"/>
<rect x="415.0" y="141.0" width="76.5" height="59.5" fill="#25282a" stroke="#505254" stroke-width="1"/>
<path d="M426.2 144.8 L433.2 151.8 L426.2 158.8 L419.2 151.8 Z" fill="#f4f4f4"/>
<path d="M427.4 148.60000000000002 L430.4 151.60000000000002 L426.4 155.60000000000002 L423.0 153.0 Z" fill="#4a4a4a"/>
<path d="M424.4 152.0 L428.8 155.0 M426.59999999999997 149.20000000000002 L427.8 153.4 M423.59999999999997 154.4 L428.4 150.0" stroke="#f4f4f4" stroke-width="1" fill="none"/>
<text x="439" y="157" font-size="11" font-weight="bold" fill="#eeeeee" stroke="#eeeeee" stroke-width=".25">desk out</text>
<path d="M431 172.5 L438 165.0 H491 V180.0 H438 Z" fill="#22416b" stroke="#3b5d8c" stroke-width="1"/>
<text x="439.9" y="177.0" font-size="11" fill="#eeeeee" stroke="#eeeeee" stroke-width=".2">front-left</text>
<path d="M431 190.5 L438 183.0 H491 V198.0 H438 Z" fill="#22416b" stroke="#3b5d8c" stroke-width="1"/>
<text x="439.9" y="195.0" font-size="11" fill="#eeeeee" stroke="#eeeeee" stroke-width=".2">front-right</text>
<rect x="568.5" y="164.3" width="130.5" height="260" fill="#484848" filter="url(#glow)" opacity=".7"/>
<rect x="569.0" y="164.8" width="129.5" height="259" fill="#25282a" stroke="#505254" stroke-width="1"/>
<path d="M580.2 168.9 L587.2 175.9 L580.2 182.9 L573.2 175.9 Z" fill="#f4f4f4"/>
<path d="M581.4000000000001 172.70000000000002 L584.4000000000001 175.70000000000002 L580.4000000000001 179.70000000000002 L577.0 177.1 Z" fill="#4a4a4a"/>
<path d="M578.4000000000001 176.1 L582.8000000000001 179.1 M580.6 173.3 L581.8000000000001 177.5 M577.6 178.5 L582.4000000000001 174.1" stroke="#f4f4f4" stroke-width="1" fill="none"/>
<text x="593" y="181.3" font-size="11" font-weight="bold" fill="#eeeeee" stroke="#eeeeee" stroke-width=".25">Hardware Playback</text>
<path d="M569 188.8 H637.0 L643.5 196.3 L637.0 203.8 H569 Z" fill="#22416b" stroke="#3b5d8c" stroke-width="1"/>
<text x="571.9" y="200.8" font-size="11" fill="#eeeeee" stroke="#eeeeee" stroke-width=".2">1 | out0L</text>
<path d="M569 206.8 H637.0 L643.5 214.3 L637.0 221.8 H569 Z" fill="#22416b" stroke="#3b5d8c" stroke-width="1"/>
<text x="571.9" y="218.8" font-size="11" fill="#eeeeee" stroke="#eeeeee" stroke-width=".2">2 | out0R</text>
<path d="M569 224.8 H637.0 L643.5 232.3 L637.0 239.8 H569 Z" fill="#22416b" stroke="#3b5d8c" stroke-width="1"/>
<text x="571.9" y="236.8" font-size="11" fill="#eeeeee" stroke="#eeeeee" stroke-width=".2">3 | out1L</text>
<path d="M569 242.8 H637.0 L643.5 250.3 L637.0 257.8 H569 Z" fill="#22416b" stroke="#3b5d8c" stroke-width="1"/>
<text x="571.9" y="254.8" font-size="11" fill="#eeeeee" stroke="#eeeeee" stroke-width=".2">4 | out1R</text>
<path d="M569 260.8 H637.0 L643.5 268.3 L637.0 275.8 H569 Z" fill="#22416b" stroke="#3b5d8c" stroke-width="1"/>
<text x="571.9" y="272.8" font-size="11" fill="#eeeeee" stroke="#eeeeee" stroke-width=".2">5 | out2LR</text>
<path d="M569 278.8 H637.0 L643.5 286.3 L637.0 293.8 H569 Z" fill="#22416b" stroke="#3b5d8c" stroke-width="1"/>
<text x="571.9" y="290.8" font-size="11" fill="#eeeeee" stroke="#eeeeee" stroke-width=".2">6 | ext0LR</text>
<path d="M569 296.8 H637.0 L643.5 304.3 L637.0 311.8 H569 Z" fill="#22416b" stroke="#3b5d8c" stroke-width="1"/>
<text x="571.9" y="308.8" font-size="11" fill="#eeeeee" stroke="#eeeeee" stroke-width=".2">7 | ext1LR</text>
<path d="M569 314.8 H637.0 L643.5 322.3 L637.0 329.8 H569 Z" fill="#22416b" stroke="#3b5d8c" stroke-width="1"/>
<text x="571.9" y="326.8" font-size="11" fill="#eeeeee" stroke="#eeeeee" stroke-width=".2">8 | micM</text>
<path d="M569 332.8 H637.0 L643.5 340.3 L637.0 347.8 H569 Z" fill="#22416b" stroke="#3b5d8c" stroke-width="1"/>
<text x="571.9" y="344.8" font-size="11" fill="#eeeeee" stroke="#eeeeee" stroke-width=".2">playback_9</text>
<path d="M569 350.8 H637.0 L643.5 358.3 L637.0 365.8 H569 Z" fill="#22416b" stroke="#3b5d8c" stroke-width="1"/>
<text x="571.9" y="362.8" font-size="11" fill="#eeeeee" stroke="#eeeeee" stroke-width=".2">playback_10</text>
<path d="M569 368.8 H637.0 L643.5 376.3 L637.0 383.8 H569 Z" fill="#22416b" stroke="#3b5d8c" stroke-width="1"/>
<text x="571.9" y="380.8" font-size="11" fill="#eeeeee" stroke="#eeeeee" stroke-width=".2">playback_11</text>
<path d="M569 386.8 H637.0 L643.5 394.3 L637.0 401.8 H569 Z" fill="#22416b" stroke="#3b5d8c" stroke-width="1"/>
<text x="571.9" y="398.8" font-size="11" fill="#eeeeee" stroke="#eeeeee" stroke-width=".2">playback_12</text>
<path d="M491 172.5 C530.0 172.5 530.0 196.3 569 196.3" stroke="#3f5f8f" stroke-width="1.8" fill="none"/>
<path d="M491 172.5 C530.0 172.5 530.0 232.3 569 232.3" stroke="#3f5f8f" stroke-width="1.8" fill="none"/>
<path d="M491 190.5 C530.0 190.5 530.0 214.3 569 214.3" stroke="#3f5f8f" stroke-width="1.8" fill="none"/>
<path d="M491 190.5 C530.0 190.5 530.0 250.3 569 250.3" stroke="#3f5f8f" stroke-width="1.8" fill="none"/>
<path d="M391 238 C480.0 238 480.0 322.3 569 322.3" stroke="#3f5f8f" stroke-width="1.8" fill="none"/>
</g>
<path d="M818.5 139 V395.5 H221" stroke="#1c2420" stroke-width="1" fill="none"/>
<rect x="825.5" y="166.5" width="7" height="26" rx="3.5" fill="#88b89c"/>
<rect x="532.5" y="402.5" width="113" height="7" rx="3.5" fill="#88b89c"/>
</svg>
<!-- STATUS -->
<div class="m" style="left:8.5px;top:433px">Buffer Size:</div>
<div class="a" style="left:87px;top:427px;width:78px;height:26px;border:1px solid #2f5e44;border-radius:3px;background:#03160c"></div>
<div class="m" style="left:94px;top:433px">256</div>
<svg class="a" style="left:140px;top:430px" width="30" height="20"><path d="M8.5 8 L13.5 13 L18.5 8" stroke="#b8e8cc" stroke-width="1.2" fill="none"/></svg>
<div class="sep" style="left:174px;top:426px;height:28px"></div>
<div class="m" style="left:182px;top:433px">Sample Rate:</div>
<div class="a" style="left:260px;top:427px;width:78px;height:26px;border:1px solid #2f5e44;border-radius:3px;background:#03160c"></div>
<div class="m" style="left:267px;top:433px">48000</div>
<svg class="a" style="left:313px;top:430px" width="30" height="20"><path d="M8.5 8 L13.5 13 L18.5 8" stroke="#b8e8cc" stroke-width="1.2" fill="none"/></svg>
<div class="sep" style="left:347px;top:426px;height:28px"></div>
<div class="m" style="left:361px;top:433px">RT</div>
<div class="sep" style="left:385px;top:426px;height:28px"></div>
<div class="m" style="left:405.5px;top:433px">2007 Xruns</div>
<div class="sep" style="left:484px;top:426px;height:28px"></div>
<div class="a" style="left:494px;top:437px;width:261px;height:6px;border-radius:3px;background:#3a5244"></div>
<div class="a" style="left:494px;top:437px;width:28px;height:6px;border-radius:3px;background:#07873e"></div>
<div class="m" style="left:759.5px;top:433px">DSP Load: 11%</div>
</body></html>
